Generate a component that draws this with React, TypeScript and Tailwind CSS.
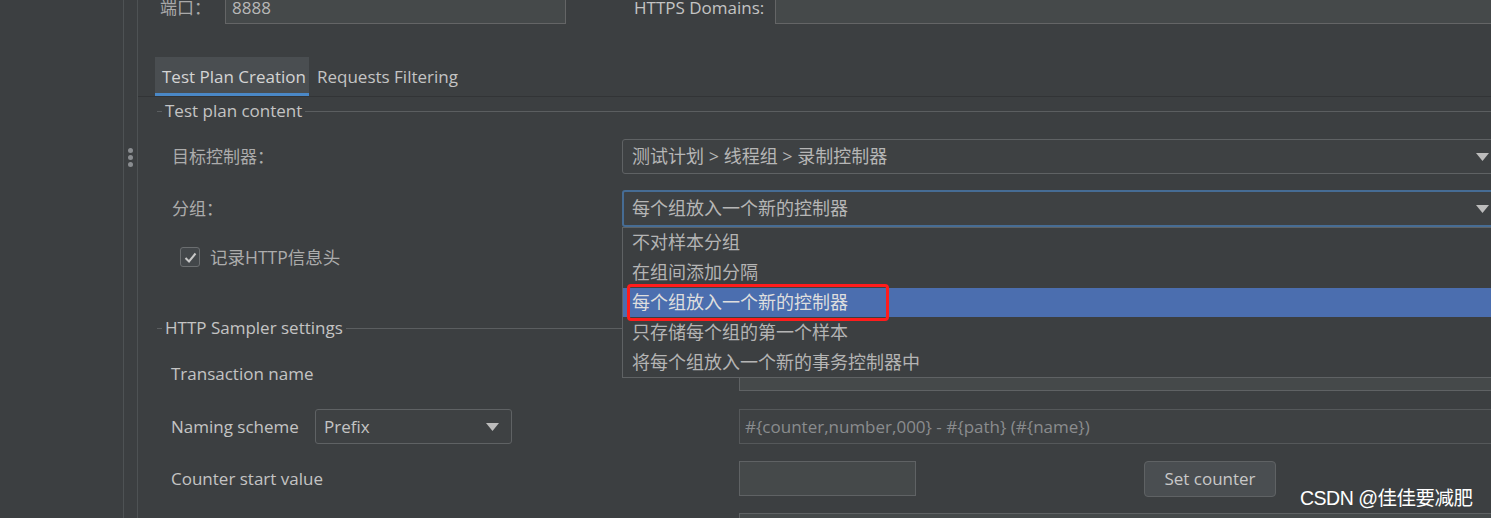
import React from 'react';

const Arrow = () => (
  <svg width="13" height="8" viewBox="0 0 13 8" className="shrink-0">
    <path d="M0 0 L13 0 L6.5 8 Z" fill="#bcbcbc" />
  </svg>
);

function GroupTitle({ title }: { title: string }) {
  return (
    <div className="flex items-center h-[22px] pl-[19px]">
      <div className="w-[5px] h-px bg-[#5b5e60]" />
      <span className="px-[3px] text-[17px] text-[#c4c4c4]">{title}</span>
      <div className="flex-1 h-px bg-[#5b5e60]" />
    </div>
  );
}

const groupingOptions = [
  '不对样本分组',
  '在组间添加分隔',
  '每个组放入一个新的控制器',
  '只存储每个组的第一个样本',
  '将每个组放入一个新的事务控制器中',
];

export default function App() {
  return (
    <div className="w-[1491px] h-[518px] overflow-hidden bg-[#3c3f41] flex text-[#bbbbbb] font-['Open_Sans','Noto_Sans_CJK_SC',sans-serif] relative">
      {/* left tree panel */}
      <div className="w-[124px] shrink-0 border-r border-[#4e5254]" />
      <div className="w-[14px] shrink-0 border-r border-[#4e5254] flex flex-col items-center pt-[148px] gap-[2px]">
        <div className="w-[5px] h-[5px] rounded-full bg-[#8a8d90]" />
        <div className="w-[5px] h-[5px] rounded-full bg-[#8a8d90]" />
        <div className="w-[5px] h-[5px] rounded-full bg-[#8a8d90]" />
      </div>

      <div className="relative w-[1362px] shrink-0">
        {/* port row */}
        <div className="flex items-center h-[33px] -mt-[9px] pl-[22px] text-[17px]">
          <span className="w-[65px] text-[#a9a9a9]">端口：</span>
          <div className="w-[341px] h-full bg-[#45494a] border border-[#646566] flex items-center px-[6px] text-[#b8b8b8]">8888</div>
          <span className="ml-[68px] w-[141px] text-[#c4c4c4]">HTTPS Domains:</span>
          <div className="flex-1 h-full bg-[#45494a] border border-[#646566]" />
        </div>

        {/* tabs */}
        <div className="mt-[33px] pl-[17px] flex h-[40px] border-b border-[#323436]">
          <div className="w-[154px] bg-[#4a4e51] border-b-[3px] border-[#4a88c7] flex items-center pl-[7px] pt-[3px] text-[17px] text-[#d4d4d4]">
            Test Plan Creation
          </div>
          <div className="flex items-center pl-[8px] pt-[1px] text-[17px] text-[#c4c4c4]">Requests Filtering</div>
        </div>

        <div className="mt-[3px]">
          <GroupTitle title="Test plan content" />
        </div>

        {/* target controller */}
        <div className="mt-[17px] flex items-center h-[35px]">
          <span className="w-[484px] pl-[34px] text-[17px] text-[#acacac]">目标控制器：</span>
          <div className="flex-1 h-full border border-[#5f6264] rounded-[3px] bg-[#3e4143] flex items-center justify-between pl-[9px] pr-[10px] text-[18px] text-[#b6b6b6]">
            <span>测试计划 &gt; 线程组 &gt; 录制控制器</span>
            <Arrow />
          </div>
        </div>

        {/* grouping */}
        <div className="mt-[16px] flex items-center h-[37px]">
          <span className="w-[484px] pl-[34px] text-[17px] text-[#acacac]">分组：</span>
          <div className="flex-1 h-full border-2 border-[#466c94] rounded-[3px] bg-[#3e4143] flex items-center justify-between pl-[8px] pr-[9px] text-[18px] text-[#b6b6b6]">
            <span>每个组放入一个新的控制器</span>
            <Arrow />
          </div>
        </div>

        {/* record headers */}
        <div className="mt-[20px] flex items-center h-[20px] pl-[42px]">
          <div className="w-[20px] h-[20px] rounded-[3px] border border-[#6b6e70] bg-[#43474a] flex items-center justify-center">
            <svg width="13" height="11" viewBox="0 0 13 11">
              <path d="M1.5 6 L5 9.5 L11.5 1.5" stroke="#c8c8c8" strokeWidth="2" fill="none" />
            </svg>
          </div>
          <span className="ml-[10px] text-[17.5px] text-[#acacac]">记录HTTP信息头</span>
        </div>

        <div className="mt-[50px]">
          <GroupTitle title="HTTP Sampler settings" />
        </div>

        {/* transaction name */}
        <div className="mt-[18px] flex items-center h-[34px]">
          <span className="w-[601px] pl-[33px] text-[17px] text-[#c4c4c4]">Transaction name</span>
          <div className="flex-1 h-full bg-[#45494a] border border-[#5f6264]" />
        </div>

        {/* naming scheme */}
        <div className="mt-[18px] flex items-center h-[35px]">
          <span className="w-[177px] pl-[33px] text-[17px] text-[#c4c4c4]">Naming scheme</span>
          <div className="w-[197px] h-full border border-[#5f6264] rounded-[3px] bg-[#3e4143] flex items-center justify-between pl-[8px] pr-[12px] text-[17px] text-[#c4c4c4]">
            <span>Prefix</span>
            <Arrow />
          </div>
          <div className="ml-[227px] flex-1 h-full bg-[#3e4143] border border-[#55585a] flex items-center px-[5px] text-[17px] text-[#8a8c8e]">
            #{'{'}counter,number,000{'}'} - #{'{'}path{'}'} (#{'{'}name{'}'})
          </div>
        </div>

        {/* counter start */}
        <div className="mt-[17px] flex items-center h-[35px]">
          <span className="w-[601px] pl-[33px] text-[17px] text-[#c4c4c4]">Counter start value</span>
          <div className="w-[177px] h-full bg-[#45494a] border border-[#5f6264]" />
          <button className="ml-[228px] w-[132px] h-[36px] rounded-[4px] border border-[#5f6264] bg-[#4a4e51] text-[17px] text-[#c8c8c8]">
            Set counter
          </button>
        </div>

        <div className="mt-[17px] ml-[601px] h-[30px] bg-[#45494a] border border-[#5f6264]" />

        {/* open combo popup */}
        <div className="absolute left-[484px] top-[227px] w-[880px] h-[151px] bg-[#3c3f41] border border-[#5f6264] flex flex-col text-[18px] text-[#b4b4b4]">
          {groupingOptions.map((opt, i) => (
            <div
              key={opt}
              className={
                i === 2
                  ? 'h-[30px] flex items-center pl-[9px] bg-[#4b6eaf] text-[#dedede]'
                  : 'h-[30px] flex items-center pl-[9px]'
              }
            >
              {opt}
            </div>
          ))}
        </div>

        {/* annotation box */}
        <div className="absolute left-[489px] top-[284px] w-[262px] h-[37px] border-[3px] border-[#ff1c1c] rounded-[4px]" />
      </div>

      <div className="absolute left-[1300px] top-[484px] text-[19.5px] text-white font-['Liberation_Sans','Noto_Sans_CJK_SC',sans-serif] tracking-[-0.5px]">
        CSDN @佳佳要减肥
      </div>
    </div>
  );
}
